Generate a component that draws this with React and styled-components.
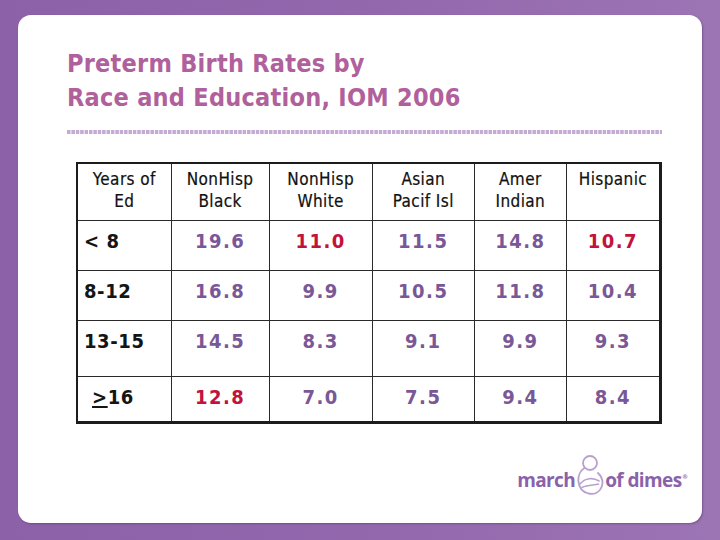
import React from "react";
import styled, { createGlobalStyle } from "styled-components";

const GlobalStyle = createGlobalStyle`
  html, body {
    margin: 0;
    padding: 0;
  }
  body {
    font-family: "DejaVu Sans Condensed", "DejaVu Sans", sans-serif;
  }
`;

// --- Layout ---
const Frame = styled.div`
  width: 720px;
  height: 540px;
  box-sizing: border-box;
  padding: 15px 18px 17px 18px;
  background: linear-gradient(90deg, #8c61a7 0%, #9468ad 55%, #9c75b5 100%);
`;

const Card = styled.div`
  height: 100%;
  box-sizing: border-box;
  background: #ffffff;
  border-radius: 13px;
  padding: 32px 40px 0 49px;
  display: flex;
  flex-direction: column;
  box-shadow: 1px 1px 2px rgba(60, 30, 80, 0.35);
`;

const Title = styled.h1`
  margin: 0;
  font-family: "DejaVu Sans Condensed", "DejaVu Sans", sans-serif;
  font-weight: bold;
  font-size: 25px;
  line-height: 34px;
  color: #b0609b;
  letter-spacing: 0.25px;
`;

const DottedRule = styled.div`
  margin-top: 15px;
  width: 595px;
  height: 4px;
  background-image: linear-gradient(
    90deg,
    #c4abd3 0,
    #c4abd3 3.2px,
    transparent 3.2px
  );
  background-size: 4.4px 4px;
  background-repeat: repeat-x;
`;

const Table = styled.table`
  margin: 28px 0 0 9px;
  border-collapse: collapse;
  border-top: 2px solid #1c1c1c;
  border-left: 2px solid #1c1c1c;
  border-right: 3px solid #1c1c1c;
  border-bottom: 3px solid #1c1c1c;
  table-layout: fixed;
`;

const HeadCell = styled.th`
  width: ${(p) => p.$w}px;
  height: 57px;
  box-sizing: border-box;
  border: 1px solid #2a2a2a;
  padding: 4px 2px 0;
  vertical-align: top;
  font-weight: normal;
  font-size: 17px;
  line-height: 22px;
  letter-spacing: 0.4px;
  color: #111111;
  text-align: center;
  -webkit-text-stroke: 0.2px #111111;
`;

const Row = styled.tr`
  height: ${(p) => p.$h}px;
`;

const LabelCell = styled.td`
  border: 1px solid #2a2a2a;
  padding: 8px 0 0 ${(p) => (p.$indent ? 14 : 6)}px;
  vertical-align: top;
  font-weight: bold;
  font-size: 20px;
  line-height: 24px;
  color: #151515;
  letter-spacing: 0.6px;
`;

const ValueCell = styled.td`
  border: 1px solid #2a2a2a;
  padding: 8px 0 0;
  vertical-align: top;
  text-align: center;
  font-weight: bold;
  font-size: 20px;
  line-height: 24px;
  letter-spacing: 1.5px;
  color: ${(p) => (p.$hot ? "#c3123c" : "#7a5797")};
`;

const Under = styled.span`
  text-decoration: underline;
  text-underline-offset: 2px;
`;

const Footer = styled.div`
  margin-top: auto;
  margin-bottom: 27px;
  margin-right: -25px;
  display: flex;
  justify-content: flex-end;
`;

const Logo = styled.div`
  display: flex;
  align-items: center;
  color: #8a62ab;
  font-family: "Open Sans", "DejaVu Sans", sans-serif;
  font-weight: bold;
  font-size: 19px;
  letter-spacing: -0.6px;
`;

const LogoWord = styled.span`
  line-height: 1;
  margin-top: 10px;
`;

const Reg = styled.sup`
  font-size: 6px;
  margin-left: 1px;
  vertical-align: 8px;
`;

// --- Data ---
const columns = [
  { label: ["Years of", "Ed"], w: 94 },
  { label: ["NonHisp", "Black"], w: 98 },
  { label: ["NonHisp", "White"], w: 103 },
  { label: ["Asian", "Pacif Isl"], w: 102 },
  { label: ["Amer", "Indian"], w: 92 },
  { label: ["Hispanic"], w: 94 },
];

// red = highlighted values
const rows = [
  { label: "< 8", h: 50, values: ["19.6", "11.0", "11.5", "14.8", "10.7"], hot: [1, 4] },
  { label: "8-12", h: 50, values: ["16.8", "9.9", "10.5", "11.8", "10.4"], hot: [] },
  { label: "13-15", h: 56, values: ["14.5", "8.3", "9.1", "9.9", "9.3"], hot: [] },
  { label: "ge16", h: 46, values: ["12.8", "7.0", "7.5", "9.4", "8.4"], hot: [0] },
];

const MomIcon = () => (
  <svg width="30" height="42" viewBox="0 0 30 42" fill="none">
    <circle cx="15" cy="9" r="7" stroke="#b9a1cf" strokeWidth="1.8" />
    <path
      d="M9.5 14 C1 19, 0.5 36, 13.5 39.5 C26 42, 32 28, 23 19"
      stroke="#b9a1cf"
      strokeWidth="1.8"
      strokeLinecap="round"
    />
    <path
      d="M5 30 C10 24, 18 23, 24 27 M7 33.5 C13 30.5, 19 31.5, 23.5 30"
      stroke="#b9a1cf"
      strokeWidth="1.6"
      strokeLinecap="round"
    />
  </svg>
);

const App = () => {
  return (
    <>
      <GlobalStyle />
      <Frame>
        <Card>
          <Title>
            Preterm Birth Rates by
            <br />
            Race and Education, IOM 2006
          </Title>
          <DottedRule />

          <Table>
            <thead>
              <tr>
                {columns.map((c) => (
                  <HeadCell key={c.label.join()} $w={c.w}>
                    {c.label.map((l, i) => (
                      <React.Fragment key={l}>
                        {i > 0 && <br />}
                        {l}
                      </React.Fragment>
                    ))}
                  </HeadCell>
                ))}
              </tr>
            </thead>
            <tbody>
              {rows.map((r) => (
                <Row key={r.label} $h={r.h}>
                  {r.label === "ge16" ? (
                    <LabelCell $indent>
                      <Under>&gt;</Under>16
                    </LabelCell>
                  ) : (
                    <LabelCell>{r.label}</LabelCell>
                  )}
                  {r.values.map((v, i) => (
                    <ValueCell key={i} $hot={r.hot.includes(i)}>
                      {v}
                    </ValueCell>
                  ))}
                </Row>
              ))}
            </tbody>
          </Table>

          <Footer>
            <Logo>
              <LogoWord>march</LogoWord>
              <MomIcon />
              <LogoWord>
                of dimes<Reg>®</Reg>
              </LogoWord>
            </Logo>
          </Footer>
        </Card>
      </Frame>
    </>
  );
};

export default App;
